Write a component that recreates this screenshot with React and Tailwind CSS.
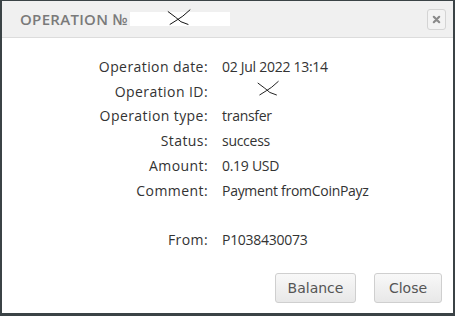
import React from "react";

const rows = [
  { label: "Operation date:", value: "02 Jul 2022 13:14" },
  { label: "Operation ID:", value: null },
  { label: "Operation type:", value: "transfer" },
  { label: "Status:", value: "success" },
  { label: "Amount:", value: "0.19 USD" },
  { label: "Comment:", value: "Payment fromCoinPayz" },
  { label: "", value: "" },
  { label: "From:", value: "P1038430073" },
];

const Scribble = ({ className }) => (
  <svg viewBox="0 0 30 20" className={className} fill="none" stroke="#000" strokeWidth="1">
    <path d="M2 3 L10 9 L16 14 L24 17" />
    <path d="M26 1 L18 8 L12 12 L4 17" />
  </svg>
);

export default function App() {
  return (
    <div className="w-[455px] h-[316px] bg-[#3b4346] pt-px pl-[2px] pr-[2px] pb-[3px] font-['Open_Sans',sans-serif]">
      <div className="h-full bg-white flex flex-col">
        <div className="h-[37px] bg-[#f0f0f0] border-b border-[#dcdcdc] flex items-center pl-[18px] pr-[7px]">
          <span className="text-[15px] font-semibold tracking-[0.02em] text-[#7a7a7a] font-['Open_Sans',sans-serif]">
            OPERATION №
          </span>
          <div className="relative ml-[2px] w-[100px] h-[14px] bg-white">
            <Scribble className="absolute left-[36px] top-[-4px] w-[28px] h-[20px]" />
          </div>
          <button className="ml-auto w-[19px] h-[21px] border border-[#d4d4d4] rounded-[3px] bg-[#f3f3f3] flex items-center justify-center">
            <svg viewBox="0 0 10 10" className="w-[9px] h-[9px]" stroke="#8a8a8a" strokeWidth="2.4" strokeLinecap="round">
              <path d="M2 2 L8 8 M8 2 L2 8" />
            </svg>
          </button>
        </div>

        <div className="flex-1 flex flex-col pt-[16px] text-[14px] text-[#333]">
          {rows.map((r, i) => (
            <div key={i} className="flex h-[24.8px] items-center">
              <div className="w-[206px] text-right tracking-[0.03em]">{r.label}</div>
              <div className="pl-[14px] tracking-[-0.02em]">
                {r.value === null ? (
                  <div className="relative w-[40px] h-[18px]">
                    <Scribble className="absolute left-[34px] top-[-2px] w-[26px] h-[18px]" />
                  </div>
                ) : (
                  r.value
                )}
              </div>
            </div>
          ))}

          <div className="mt-auto mb-[10px] flex justify-end gap-[18px] pr-[11px] font-['DejaVu_Sans',sans-serif] text-[14px] text-[#555]">
            <button className="w-[81px] h-[30px] border border-[#cfcfcf] rounded-[3px] bg-gradient-to-b from-[#f8f8f8] to-[#e8e8e8]">
              Balance
            </button>
            <button className="w-[68px] h-[30px] border border-[#cfcfcf] rounded-[3px] bg-gradient-to-b from-[#f8f8f8] to-[#e8e8e8]">
              Close
            </button>
          </div>
        </div>
      </div>
    </div>
  );
}
